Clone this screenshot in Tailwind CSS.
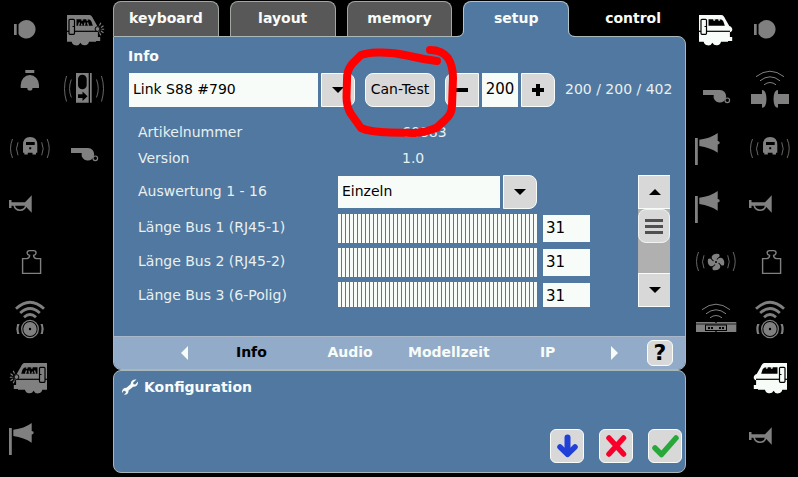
<!DOCTYPE html>
<html lang="de">
<head>
<meta charset="utf-8">
<meta name="viewport" content="width=device-width, initial-scale=1">
<title>Setup – Info</title>
<script src="https://cdn.jsdelivr.net/npm/@tailwindcss/browser@4"></script>
</head>
<body class="bg-black text-sm leading-5 text-[#f8fcf8] font-['DejaVu_Sans','Noto_Sans',sans-serif]">

<!-- Function symbols, all on a 54 x 58 cell -->
<svg width="0" height="0" class="absolute" aria-hidden="true">
  <defs>
    <symbol id="lamp" viewBox="0 0 54 58">
      <path d="M12 24h2.700v11H12zM16.500 24.500a9.200 9.200 0 1 1 0 9.600z" fill="currentColor"/>
    </symbol>
    <symbol id="loco" viewBox="0 0 54 58">
      <path d="M11 15h22.300c2 0 3 2 4 4l4 7c2 .5 3 2 3 3.500s-1 2.500-2.400 2.800V37h2.300v4H40v.7h-7a4.600 4.600 0 0 1-8.600 1 4.600 4.600 0 0 1-8.700-1H11z" fill="currentColor"/>
      <path d="M20.500 19.300h12q2 0 3 2.500l1.300 3.900H20.500z" fill="#000"/>
      <path d="M11 31.300h31" stroke="#000" stroke-width="1.200" fill="none"/>
      <rect x="13" y="19.300" width="5.500" height="15" rx="1" fill="currentColor" stroke="#000" stroke-width="1.200"/>
      <path d="M16.500 26.500h1.500" stroke="#000"/>
      <path d="M25 19.300h2.500q-.3 1.500-1.300 1.500t-1.200-1.500zM30 19.300h2.500q-.3 1.500-1.300 1.500t-1.200-1.500z" fill="currentColor"/>
    </symbol>
    <symbol id="crew" viewBox="0 0 54 58">
      <path d="M22.500 25.700l1-3.200M26 25.700l-.5-2M28.500 25.700l.5-3M32.500 25.700l-1-3.200" fill="none" stroke="currentColor" stroke-width="1.200"/>
      <circle cx="41.500" cy="29" r="2.400" fill="currentColor" stroke="#000"/>
      <path d="M43.500 25.500l1.300-2.800M45 27.500l2.500-1.800M45.500 29.300h2.700M45 31l2.500 1.800M43.500 32.500l1.300 2.800" stroke="currentColor" stroke-width="1.100"/>
    </symbol>
    <symbol id="bell" viewBox="0 0 54 58">
      <path d="M23.300 12h9v3h-9zM18.700 30v-3a9.150 10 0 0 1 18.300 0v3h-6.500a2.600 2.600 0 0 1-5.200 0z" fill="currentColor"/>
    </symbol>
    <symbol id="door" viewBox="0 0 54 58">
      <path d="M20 15h12.700v29.700H20zM34 15h1.700v29.700H34z" fill="currentColor"/>
      <rect x="22" y="16.700" width="8.700" height="14.600" rx="4.300" fill="#000"/>
      <path d="M22 36.300h4.500v-2.800l5 4.700-5 4.700v-2.800H22z" fill="#000"/>
      <path d="M10.500 18q-4 12.500 0 25.500M15.300 21.500q-3.500 9 0 18M40.500 21.500q3.500 9 0 18M45.500 18q4 12.500 0 25.500" fill="none" stroke="currentColor" stroke-width=".8"/>
    </symbol>
    <symbol id="waves" viewBox="0 0 54 58">
      <path d="M10.500 23q-4 9.500 0 19M16 26.300q-3 6.500 0 13M39.700 26.300q3 6.500 0 13M45.200 23q4 9.500 0 19" fill="none" stroke="currentColor" stroke-width=".8"/>
    </symbol>
    <symbol id="train" viewBox="0 0 54 58">
      <use href="#waves"/>
      <path d="M21 36.700V29q0-8 7.150-8T35.300 29v7.700h-1.300v1.800h-3.500v-1.800h-4.700v1.800h-3.500v-1.800z" fill="currentColor"/>
      <path d="M24 26h8.700v3H24zM27.200 31.200h2v2h-2z" fill="#000"/>
    </symbol>
    <symbol id="whistle" viewBox="0 0 54 58">
      <path d="M15 32h17a6.300 6.300 0 1 1-6.300 5H15z" fill="currentColor"/>
      <circle cx="39.300" cy="42.300" r="2.300" fill="none" stroke="currentColor" stroke-width="1.200"/>
    </symbol>
    <symbol id="trumpet" viewBox="0 0 54 58">
      <path d="M7 26h2.500v2.200H23l6.700-6.900v17.400L23 31.800H9.500V34H7z" fill="currentColor"/>
      <path d="M12 31q1 5.200 6 5.200t6-5.200" fill="none" stroke="currentColor" stroke-width="1.500"/>
    </symbol>
    <symbol id="weight" viewBox="0 0 54 58">
      <path d="M20.600 41.400V26.600h4q3-.6 3-3.200-2.500-.7-2.500-2.600 0-2.200 2.500-2.200h4q2.500 0 2.500 2.200 0 1.900-2.500 2.600 0 2.600 3 3.200h4v14.800z" fill="none" stroke="currentColor" stroke-width="1.400"/>
    </symbol>
    <symbol id="wheel" viewBox="0 0 54 58">
      <path d="M14 18.800q14-13 28 0M18.200 23q9.800-9 19.600 0M22 27.300q6-5.500 12 0" fill="none" stroke="currentColor" stroke-width="2.800"/>
      <ellipse cx="28" cy="39" rx="8.300" ry="8.700" fill="none" stroke="currentColor" stroke-width="1.300"/>
      <ellipse cx="28" cy="39" rx="6.700" ry="7.100" fill="currentColor"/>
      <circle cx="28" cy="39" r="1.200" fill="#000"/>
      <path d="M17.500 34q-2 5 0 10h-2.300q-1.800-5 0-10zM38.500 34q2 5 0 10h2.300q1.800-5 0-10z" fill="currentColor"/>
    </symbol>
    <symbol id="horn" viewBox="0 0 54 58">
      <path d="M7 22h2.800v27H7zM11.300 23.700q11-1.200 18.400-6.700V25q2 0 2 1.800t-2 1.800v8.100Q22 31.500 11.300 30z" fill="currentColor"/>
    </symbol>
    <symbol id="radio" viewBox="0 0 54 58">
      <path d="M14 18.700q14-11 28 0M18 22.800q10-8 20 0M22 26.800q6-4.600 12 0" fill="none" stroke="currentColor"/>
    </symbol>
    <symbol id="coupler" viewBox="0 0 54 58">
      <use href="#radio"/>
      <path d="M9 36h11v-4q4.300 0 4.500 9-.2 8.700-4.500 8.700V46H9zM47 36H36v-4q-4.300 0-4.500 9 .2 8.700 4.500 8.700V46h11z" fill="currentColor"/>
    </symbol>
    <symbol id="fan" viewBox="0 0 54 58">
      <use href="#waves" y="-3"/>
      <g fill="currentColor">
        <path id="blade" d="M28 29.500q-5.500-1.500-4-5.500 2-3 7-2 1.500 2.500-.7 3.500-2 1-2.300 4z"/>
        <use href="#blade" transform="rotate(90 28 30)"/>
        <use href="#blade" transform="rotate(180 28 30)"/>
        <use href="#blade" transform="rotate(270 28 30)"/>
        <path d="M28 27.300a2.700 2.700 0 1 1 0 5.400 2.700 2.700 0 0 1 0-5.400z"/>
      </g>
      <circle cx="28" cy="30" r="1" fill="#000"/>
    </symbol>
    <symbol id="track" viewBox="0 0 54 58">
      <use href="#radio" y="1"/>
      <path d="M8 32h19.300v1h1.400v-1h19.600v10H28.700v-1h-1.400v1H8z" fill="currentColor"/>
      <path d="M8 34h40.300" stroke="#000" stroke-width=".7"/>
      <rect x="17.500" y="35" width="21" height="5.500" fill="currentColor" stroke="#000"/>
      <path d="M20 37h2v2h-2zM23 37h2v2h-2zM31 37h2v2h-2zM34 37h2v2h-2z" fill="#000"/>
    </symbol>
  </defs>
</svg>

<div class="grid min-h-screen grid-cols-[113px_1fr_112px]">

  <aside aria-label="Funktionen links" class="grid auto-rows-[58px] grid-cols-[54px_54px] pl-0.5 text-[#808080]">
    <button aria-label="Licht"><svg class="h-[58px] w-[54px]"><use href="#lamp"/></svg></button>
    <button aria-label="Führerstand 1"><svg class="h-[58px] w-[54px]"><use href="#loco"/><use href="#crew"/></svg></button>
    <button aria-label="Glocke"><svg class="h-[58px] w-[54px]"><use href="#bell"/></svg></button>
    <button aria-label="Tür"><svg class="h-[58px] w-[54px]"><use href="#door"/></svg></button>
    <button aria-label="Fahrgeräusch"><svg class="h-[58px] w-[54px]"><use href="#train"/></svg></button>
    <button aria-label="Pfeife"><svg class="h-[58px] w-[54px]"><use href="#whistle"/></svg></button>
    <button aria-label="Horn" class="col-start-1"><svg class="h-[58px] w-[54px]"><use href="#trumpet"/></svg></button>
    <button aria-label="Masse" class="col-start-1"><svg class="h-[58px] w-[54px]"><use href="#weight"/></svg></button>
    <button aria-label="Bremsgeräusch" class="col-start-1"><svg class="h-[58px] w-[54px]"><use href="#wheel"/></svg></button>
    <button aria-label="Führerstand 2" class="col-start-1"><svg class="h-[58px] w-[54px]"><g transform="translate(56 0) scale(-1 1)"><use href="#loco" width="54" height="58"/><use href="#crew" width="54" height="58"/></g></svg></button>
    <button aria-label="Signalhorn" class="col-start-1"><svg class="h-[58px] w-[54px]"><use href="#horn"/></svg></button>
  </aside>

  <main class="flex min-w-0 flex-col pb-1">
    <nav aria-label="Bereiche" class="mt-px flex h-[35px] gap-[11px] font-bold">
      <button class="flex-1 rounded-t-lg border border-b-0 border-[#a0a8a0] bg-[#585858] pb-0.5">keyboard</button>
      <button class="flex-1 rounded-t-lg border border-b-0 border-[#a0a8a0] bg-[#585858] pb-0.5">layout</button>
      <button class="flex-1 rounded-t-lg border border-b-0 border-[#a0a8a0] bg-[#585858] pb-0.5">memory</button>
      <button aria-current="page" class="relative z-10 -mb-px flex-1 rounded-t-lg border border-b-0 border-[#b0c4cc] bg-[#5178a0] pb-[3px]">setup
        <svg class="absolute -left-[7px] bottom-0 h-[7px] w-[7px]" viewBox="0 0 7 7" aria-hidden="true"><path d="M7 0Q6.500 6 0 6v1h7z" fill="#5178a0"/><path d="M6.500 0Q6.500 6.500 0 6.500" fill="none" stroke="#b0c4cc"/></svg>
        <svg class="absolute -right-[7px] bottom-0 h-[7px] w-[7px]" viewBox="0 0 7 7" aria-hidden="true"><path d="M0 0Q.5 6 7 6v1H0z" fill="#5178a0"/><path d="M.5 0Q.5 6.500 7 6.500" fill="none" stroke="#b0c4cc"/></svg>
      </button>
      <button class="flex-1 border border-b-0 border-transparent pb-0.5">control</button>
    </nav>

    <section class="overflow-hidden rounded-lg rounded-tl-none border border-[#a8b8b8] bg-[#5178a0]">
      <div class="px-[15px] pt-[9px] pb-[29px]">
        <h1 class="-ml-px mb-[7px] font-bold">Info</h1>

        <div class="flex h-[34px] items-stretch text-black">
          <select aria-label="Gerät" class="min-w-0 flex-1 appearance-none bg-[#f8fcf8] px-1 pb-0.5"><option>Link S88 #790</option></select>
          <button aria-label="Geräteliste öffnen" class="ml-[3px] flex w-[34px] items-center justify-center rounded-r-lg border border-[#f8fcf8] bg-[#d8d8d8]"><svg class="h-1.5 w-3" viewBox="0 0 12 6"><path d="M0 0h12L6 6z"/></svg></button>
          <div class="relative ml-[10px] flex w-[70px]">
            <button class="flex w-full items-center justify-center rounded-lg border border-[#f8fcf8] bg-[#d8d8d8] pb-0.5 whitespace-nowrap">Can-Test</button>
            <svg class="pointer-events-none absolute -top-[33px] -left-[25px] z-10 h-[100px] w-[120px]" viewBox="340 40 120 100" fill="none" stroke="#f00" stroke-width="8" stroke-linecap="round" stroke-linejoin="round" aria-hidden="true"><path d="M437 61Q422 59 407 55.500 393 52 377 52.500 367 53 361 55L352 64Q346.500 71 347 80L346.500 97Q346.500 107 351 114L361 128Q370 132 390 132.500L415 133Q427 132 437 127.500L445 120Q452 114 452 106L453 78Q453 66 448 58 442 50 430 50"/></svg>
          </div>
          <button aria-label="Weniger" class="ml-[10px] flex w-[34px] items-center justify-center rounded-l-lg border border-[#f8fcf8] bg-[#d8d8d8]"><svg class="h-3 w-3" viewBox="0 0 12 12"><path d="M0 4h12v4H0z"/></svg></button>
          <input aria-label="Wert" value="200" class="ml-[3px] w-9 bg-[#f8fcf8] pb-0.5 text-center text-[15px]">
          <button aria-label="Mehr" class="ml-[3px] flex w-[34px] items-center justify-center rounded-r-lg border border-[#f8fcf8] bg-[#d8d8d8]"><svg class="h-3 w-3" viewBox="0 0 12 12"><path d="M0 4h4V0h4v4h4v4H8v4H4V8H0z"/></svg></button>
          <output class="ml-[10px] w-[105px] self-center pb-0.5 whitespace-nowrap text-[#e8f0f0]">200 / 200 / 402</output>
        </div>

        <dl class="mt-3 grid grid-cols-[264px_1fr] pl-[9px] leading-[26px] text-[#e8f0f0]">
          <dt>Artikelnummer</dt><dd>60883</dd>
          <dt>Version</dt><dd>1.0</dd>
        </dl>

        <div class="mt-1 flex h-[132px]">
          <div class="mr-12 grid flex-1 grid-cols-[194px_1fr_47px] grid-rows-[34px_29px_29px_29px] items-center gap-x-1.5 gap-y-[5px] overflow-hidden pl-[9px] text-black">
            <label for="mode" class="pb-0.5 text-[#e8f0f0]">Auswertung 1 - 16</label>
            <div class="flex h-[34px] gap-[3px]">
              <select id="mode" class="my-px min-w-0 flex-1 appearance-none bg-[#f8fcf8] px-1 pb-0.5"><option>Einzeln</option></select>
              <button aria-label="Auswahl öffnen" class="flex w-[34px] items-center justify-center rounded-r-lg border border-[#f8fcf8] bg-[#d8d8d8]"><svg class="h-1.5 w-3" viewBox="0 0 12 6"><path d="M0 0h12L6 6z"/></svg></button>
            </div>
            <span></span>

            <label for="bus1" class="pb-1 text-[#e8f0f0]">Länge Bus 1 (RJ45-1)</label>
            <input id="bus1" type="range" min="0" max="31" value="31" class="h-[29px] w-full appearance-none bg-[repeating-linear-gradient(90deg,#f8fcf8_0_3px,#5178a0_3px_4px)] [&::-webkit-slider-thumb]:appearance-none [&::-webkit-slider-thumb]:opacity-0">
            <input aria-label="Wert Bus 1" value="31" class="h-[27px] w-full bg-[#f8fcf8] px-[3px] pb-0.5 text-[15px]">

            <label for="bus2" class="pb-1 text-[#e8f0f0]">Länge Bus 2 (RJ45-2)</label>
            <input id="bus2" type="range" min="0" max="31" value="31" class="h-[29px] w-full appearance-none bg-[repeating-linear-gradient(90deg,#f8fcf8_0_3px,#5178a0_3px_4px)] [&::-webkit-slider-thumb]:appearance-none [&::-webkit-slider-thumb]:opacity-0">
            <input aria-label="Wert Bus 2" value="31" class="h-[27px] w-full bg-[#f8fcf8] px-[3px] pb-0.5 text-[15px]">

            <label for="bus3" class="pb-1 text-[#e8f0f0]">Länge Bus 3 (6-Polig)</label>
            <input id="bus3" type="range" min="0" max="31" value="31" class="h-[29px] w-full appearance-none bg-[repeating-linear-gradient(90deg,#f8fcf8_0_3px,#5178a0_3px_4px)] [&::-webkit-slider-thumb]:appearance-none [&::-webkit-slider-thumb]:opacity-0">
            <input aria-label="Wert Bus 3" value="31" class="h-[27px] w-full bg-[#f8fcf8] px-[3px] pb-0.5 text-[15px]">
          </div>

          <div class="flex w-8 flex-col bg-[#b0b0b0]">
            <button aria-label="Nach oben" class="flex h-[34px] items-center justify-center border border-r-0 border-[#f8fcf8] bg-[#d8d8d8]"><svg class="h-1.5 w-3" viewBox="0 0 12 6"><path d="M0 6h12L6 0z"/></svg></button>
            <button aria-label="Bildlaufgriff" class="flex h-[34px] flex-col items-center justify-center gap-[3px] rounded-lg border border-[#f0f4f0] bg-[#d8d8d8]">
              <span class="h-[3px] w-[18px] bg-[#505050]"></span><span class="h-[3px] w-[18px] bg-[#505050]"></span><span class="h-[3px] w-[18px] bg-[#505050]"></span>
            </button>
            <button aria-label="Nach unten" class="mt-auto flex h-[34px] items-center justify-center border border-r-0 border-[#f8fcf8] bg-[#d8d8d8]"><svg class="h-1.5 w-3" viewBox="0 0 12 6"><path d="M0 0h12L6 6z"/></svg></button>
          </div>
        </div>
      </div>

      <nav aria-label="Seiten" class="flex h-[33px] items-center border-t border-[#a8b8c8] bg-[#91abc8] pr-3 pl-[53px] font-bold">
        <button aria-label="Zurück" class="flex w-[35px] justify-center"><svg class="h-3.5 w-[7px]" viewBox="0 0 7 14"><path d="M7 0v14L0 7z" fill="#f8fcf8"/></svg></button>
        <div class="grid flex-1 grid-cols-4 pb-0.5">
          <button aria-current="page" class="text-black">Info</button>
          <button>Audio</button>
          <button>Modellzeit</button>
          <button>IP</button>
        </div>
        <button aria-label="Weiter" class="flex w-[35px] justify-center"><svg class="h-3.5 w-[7px]" viewBox="0 0 7 14"><path d="M0 0v14l7-7z" fill="#f8fcf8"/></svg></button>
        <button class="ml-[15px] h-[26px] w-[26px] rounded-md border border-[#f8fcf8] bg-[#d8d8d8] text-[22px] leading-6 text-black">?</button>
      </nav>
    </section>

    <section class="flex flex-1 flex-col justify-between rounded-lg border border-[#a8b8b8] bg-[#5178a0] pt-1.5 pr-[3px] pb-[9px] pl-2">
      <h2 class="flex items-center gap-1.5 font-bold">
        <svg class="h-4 w-4" viewBox="0 0 16 16" aria-hidden="true"><path d="M14.500.5 11 3.700l.6 1.600 1.700.3L16 2.500c.3 3.500-2 5.600-4.800 5.300L6.500 11.500C6.800 14 5 16.200 2 15.800l2-2.400-.7-1.500-1.500-.2L0 14c-.3-3.500 1.800-5.500 4.500-5.300l4.300-3.600C8.500 2 11 0 14.500.5z" fill="#f8fcf8"/></svg>
        Konfiguration
      </h2>
      <div class="flex justify-end gap-[15px]">
        <button aria-label="Laden" class="flex h-[34px] w-[34px] items-center justify-center rounded-md border border-[#f8fcf8] bg-[#d8d8d8]"><svg class="h-6 w-6" viewBox="0 0 24 24" fill="none" stroke="#2040d8" stroke-linecap="round"><path d="M12.500 3.500v16" stroke-width="6"/><path d="M5 13l7.500 7.300L20 13" stroke-width="5.500" stroke-linejoin="round"/></svg></button>
        <button aria-label="Abbrechen" class="flex h-[34px] w-[34px] items-center justify-center rounded-md border border-[#f8fcf8] bg-[#d8d8d8]"><svg class="h-6 w-6" viewBox="0 0 24 24" fill="none" stroke="#f8002c" stroke-width="5.500" stroke-linecap="round"><path d="M5 4l14.500 16M19.500 4 5 20"/></svg></button>
        <button aria-label="Übernehmen" class="flex h-[34px] w-[34px] items-center justify-center rounded-md border border-[#f8fcf8] bg-[#d8d8d8]"><svg class="h-7 w-7" viewBox="0 0 28 28" fill="none" stroke="#28a838" stroke-width="5.500" stroke-linecap="round" stroke-linejoin="round"><path d="M4 16l6.500 6.500L25 6"/></svg></button>
      </div>
    </section>
  </main>

  <aside aria-label="Funktionen rechts" class="grid auto-rows-[58px] grid-cols-[54px_54px] pl-0.5 text-[#808080]">
    <button aria-label="Führerstand 1" class="text-[#f8fcf8]"><svg class="h-[58px] w-[54px]"><use href="#loco"/></svg></button>
    <button aria-label="Licht"><svg class="h-[58px] w-[54px]"><use href="#lamp"/></svg></button>
    <button aria-label="Pfeife"><svg class="h-[58px] w-[54px]"><use href="#whistle"/></svg></button>
    <button aria-label="Kupplung"><svg class="h-[58px] w-[54px]"><use href="#coupler"/></svg></button>
    <button aria-label="Signalhorn 1"><svg class="h-[58px] w-[54px]"><use href="#horn"/></svg></button>
    <button aria-label="Fahrgeräusch"><svg class="h-[58px] w-[54px]"><use href="#train"/></svg></button>
    <button aria-label="Signalhorn 2"><svg class="h-[58px] w-[54px]"><use href="#horn"/></svg></button>
    <button aria-label="Horn 1"><svg class="h-[58px] w-[54px]"><use href="#trumpet"/></svg></button>
    <button aria-label="Lüfter"><svg class="h-[58px] w-[54px]"><use href="#fan"/></svg></button>
    <button aria-label="Masse"><svg class="h-[58px] w-[54px]"><use href="#weight"/></svg></button>
    <button aria-label="Schienenstoß"><svg class="h-[58px] w-[54px]"><use href="#track"/></svg></button>
    <button aria-label="Bremsgeräusch"><svg class="h-[58px] w-[54px]"><use href="#wheel"/></svg></button>
    <button aria-label="Führerstand 2" class="col-start-2 text-[#f8fcf8]"><svg class="h-[58px] w-[54px]"><g transform="translate(56 0) scale(-1 1)"><use href="#loco" width="54" height="58"/></g></svg></button>
    <button aria-label="Horn 2" class="col-start-2"><svg class="h-[58px] w-[54px]"><use href="#trumpet"/></svg></button>
  </aside>
</div>
</body>
</html>
